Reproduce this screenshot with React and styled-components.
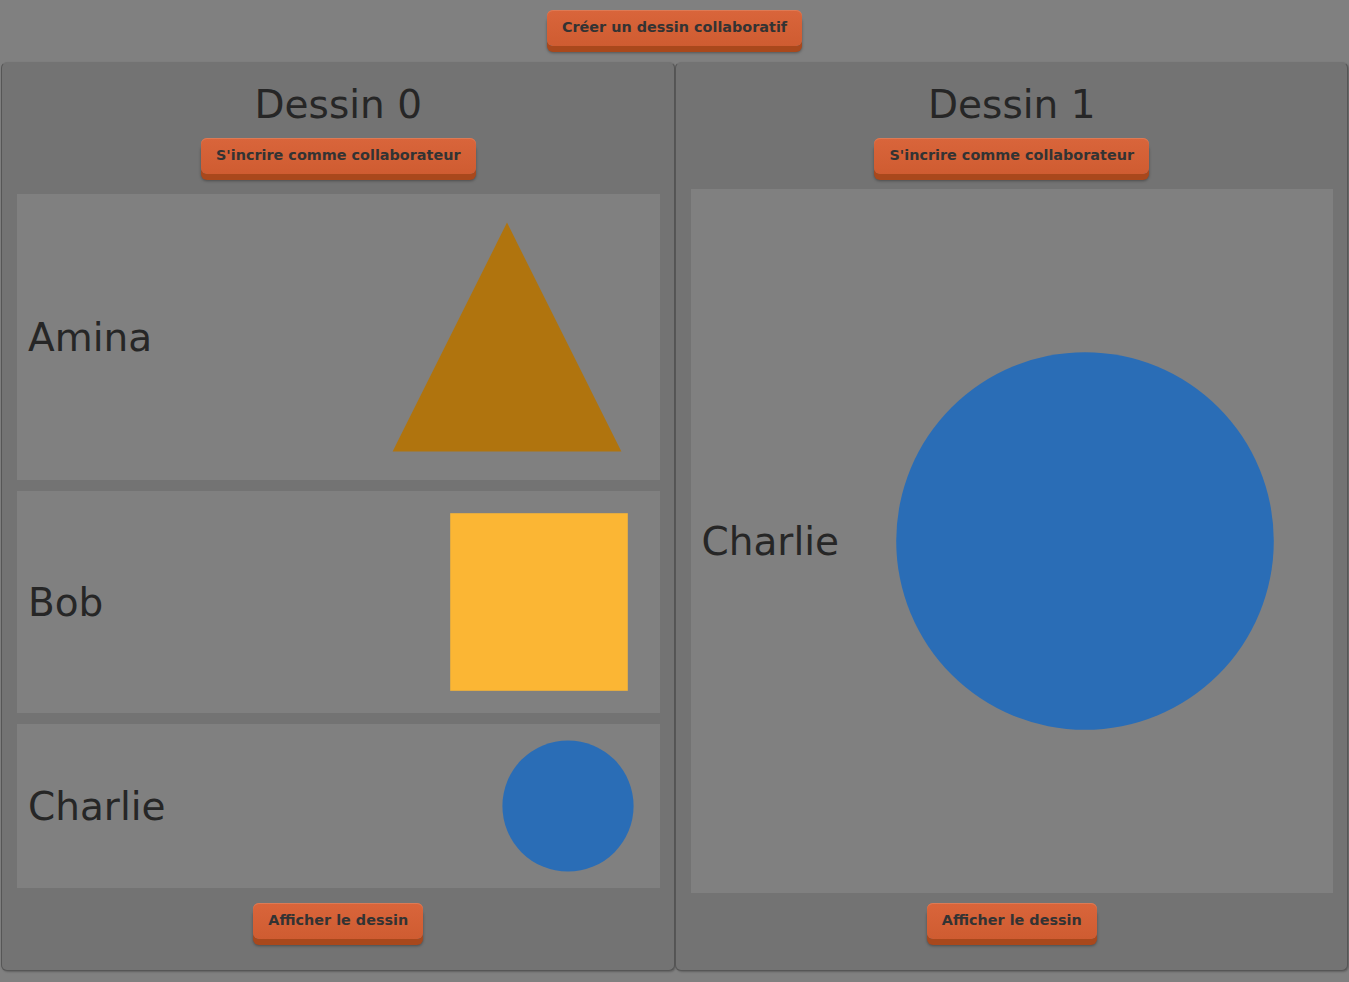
import React from 'react';
import styled, { createGlobalStyle } from 'styled-components';

const GlobalStyle = createGlobalStyle`
  html, body {
    margin: 0;
    padding: 0;
    background: #808080;
    font-family: "DejaVu Sans", Verdana, sans-serif;
  }
`;

const drawings = [
  {
    title: 'Dessin 0',
    layers: [
      { name: 'Amina', shape: 'triangle', size: 286 },
      { name: 'Bob', shape: 'square', size: 222 },
      { name: 'Charlie', shape: 'circle', size: 164 },
    ],
  },
  {
    title: 'Dessin 1',
    fill: true,
    layers: [{ name: 'Charlie', shape: 'circle', size: 472 }],
  },
];

const Shape = ({ shape, size }) => (
  <svg width={size} height={size} viewBox="0 0 100 100">
    {shape === 'triangle' && <polygon points="50,10 90,90 10,90" fill="#b0740e" />}
    {shape === 'square' && <rect x="10" y="10" width="80" height="80" fill="#fbb634" />}
    {shape === 'circle' && <circle cx="50" cy="50" r="40" fill="#2a6db6" />}
  </svg>
);

const App = () => {
  return (
    <Page>
      <GlobalStyle />
      <TopBar>
        <Button>Créer un dessin collaboratif</Button>
      </TopBar>
      <Board>
        {drawings.map((d) => (
          <Panel key={d.title}>
            <Title>{d.title}</Title>
            <Button>S'incrire comme collaborateur</Button>
            <Canvas>
              {d.layers.map((l, i) => (
                <Layer key={i} $fill={d.fill}>
                  <Name>{l.name}</Name>
                  <Shape shape={l.shape} size={l.size} />
                </Layer>
              ))}
            </Canvas>
            <Footer>
              <Button>Afficher le dessin</Button>
            </Footer>
          </Panel>
        ))}
      </Board>
    </Page>
  );
};

export default App;

const Page = styled.div`
  min-height: 982px;
  box-sizing: border-box;
  padding: 10px 1px 10px;
`;

const TopBar = styled.div`
  display: flex;
  justify-content: center;
  margin-bottom: 16px;
`;

const Button = styled.button`
  font-family: "DejaVu Sans", Verdana, sans-serif;
  font-weight: bold;
  font-size: 14.4px;
  line-height: 17px;
  color: #333;
  padding: 9px 15px 10px;
  border: none;
  border-radius: 6px;
  background: linear-gradient(#d9653b, #cf5c31);
  box-shadow: 0 1px 0 #dd7a55 inset, 0 6px 0 #a9481c, 0 7px 3px rgba(0, 0, 0, 0.35);
  cursor: pointer;
  align-self: center;
`;

const Board = styled.div`
  display: grid;
  grid-template-columns: 1fr 1fr;
  align-items: stretch;
`;

const Panel = styled.div`
  display: flex;
  flex-direction: column;
  align-items: stretch;
  background: #737373;
  border: 1px solid #565656;
  border-top-color: #737373;
  border-radius: 6px;
  box-shadow: 1px 1px 2px rgba(0, 0, 0, 0.25);
  padding: 18px 14px 31px 15px;
`;

const Title = styled.h2`
  margin: 0 0 10px;
  text-align: center;
  font-weight: normal;
  font-size: 39px;
  line-height: 47px;
  color: #262626;
`;

const Canvas = styled.div`
  flex: 1;
  display: flex;
  flex-direction: column;
  gap: 11px;
  padding: 5px 0;
  margin-top: 15px;
`;

const Layer = styled.div`
  display: flex;
  align-items: center;
  justify-content: space-between;
  background: #808080;
  padding: ${(p) => (p.$fill ? '0 12px 0 11px' : '0 10px 0 11px')};
  flex: ${(p) => (p.$fill ? 1 : 'none')};
  margin: ${(p) => (p.$fill ? '-5px 0' : '0')};
  svg {
    display: block;
  }
`;

const Name = styled.span`
  font-size: 39px;
  color: #262626;
`;

const Footer = styled.div`
  display: flex;
  justify-content: center;
  margin-top: 10px;
`;
